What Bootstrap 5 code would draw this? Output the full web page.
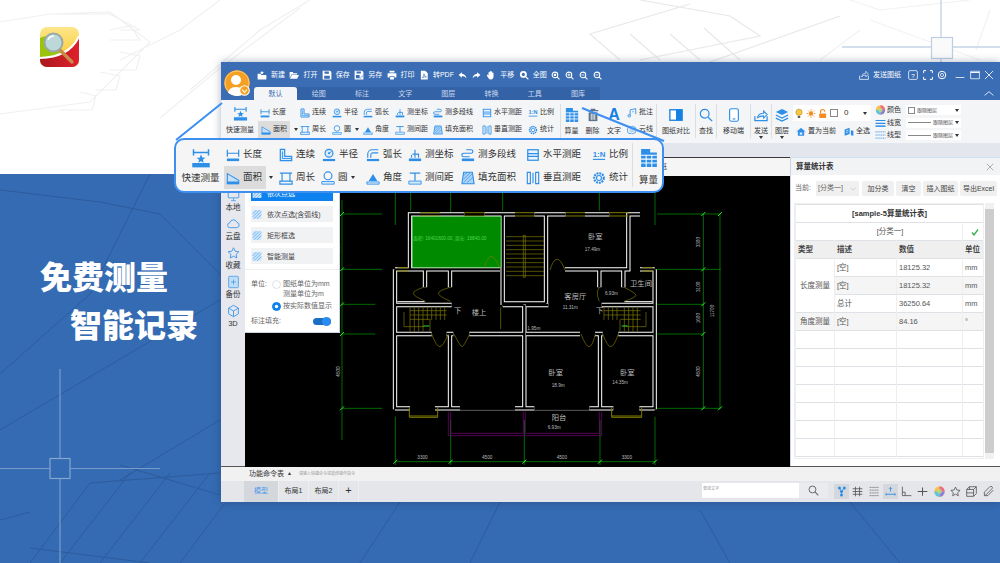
<!DOCTYPE html>
<html lang="zh">
<head>
<meta charset="UTF-8">
<title>免费测量 智能记录</title>
<link href="https://cdn.jsdelivr.net/npm/bootstrap@5.3.0/dist/css/bootstrap.min.css" rel="stylesheet">
<style>
body { margin: 0; background: #fff; font-family: "Liberation Sans", "Noto Sans CJK SC", sans-serif; color: #333; overflow: hidden; }
.slide { position: relative; width: 1000px; height: 563px; overflow: hidden; }
.band-top { position: relative; height: 174px; background: #fff; padding: 27px 0 0 40px; }
.band-low { position: relative; height: 389px; background: #356bb2; padding: 77px 0 0 40px; }
.bg-lines { position: absolute; left: 0; top: 0; width: 100%; height: 100%; }
.hero { position: relative; color: #fff; font-family: "Noto Sans CJK SC", sans-serif; font-weight: 900; font-size: 32px; line-height: 48px; }
.hero-two { padding-left: 30px; }
.app-logo { position: relative; display: block; width: 39px; height: 40px; }

.app-win { position: absolute; left: 221px; top: 62px; width: 779px; height: 440px; display: flex; flex-direction: column; background: #e6e8ee; box-shadow: 0 0 8px rgba(20,40,80,.35); }
.title-area { height: 38px; background: #3a6db3; display: flex; color: #fff; flex: none; }
.avatar { position: relative; width: 26px; height: 26px; margin: 8px 4px 0 3px; flex: none; }
.avatar-face { display: block; width: 26px; height: 26px; border-radius: 50%; }
.avatar-ok { position: absolute; left: 15px; top: 15px; width: 11px; height: 11px; }
.title-main { flex: 1; min-width: 0; display: flex; flex-direction: column; }
.quick-row { height: 25px; display: flex; align-items: center; font-size: 7px; padding-left: 3px; padding-top: 1px; }
.qi { display: flex; align-items: center; gap: 4px; margin-right: 4.4px; }
.qi svg { width: 10px; height: 10px; }
.qi-solo { margin-right: 5px; }
.qi-solo svg { width: 9px; height: 9px; }
.win-tools { margin-left: auto; display: flex; align-items: center; margin-right: 6px; font-size: 7px; }
.win-tools svg { width: 10px; height: 10px; margin-left: 4.5px; }
.win-tools svg:first-child { margin-left: 0; }
.win-tools span { margin: 0 2.5px 0 4px; }
.win-tools .win-min { margin-left: 8px; }
.tab-row { height: 13px; display: flex; font-size: 7px; align-items: stretch; }
.rtab { width: 43.2px; background: #3363a6; color: #c9d8ee; text-align: center; line-height: 13px; }
.rtab-on { background: #f4f5f7; color: #3a6db3; border-radius: 3px 3px 0 0; }
.rib-chevron { margin-left: auto; margin-right: 6px; width: 10px; height: 13px; }

.ribbon { height: 43px; background: #f4f5f7; display: flex; padding: 4px 0 0 1px; font-size: 7px; flex: none; }
.meas { display: grid; grid-auto-flow: column; grid-template-rows: 17px 17px; grid-template-columns: 36px 40px 32px 31px 32px 38px 49px 46px 34px; }
.mi { display: flex; align-items: center; gap: 2px; padding-left: 2px; white-space: nowrap; }
.mi svg, .mb svg { color: #2e8fe8; }
.mi svg { width: 10px; height: 10px; flex: none; }
.mi-sel { background: #dcdcdc; padding-left: 3px; padding-right: 3px; margin-left: -2px; height: 100%; }
.mi-drop { gap: 4px; padding-left: 2px; }
.rcaret { width: 0; height: 0; border: 2px solid transparent; border-top: 3px solid #333; border-bottom: 0; flex: none; }
.fast { grid-row: span 2; display: flex; flex-direction: column; align-items: center; }
.fast svg { width: 15px; height: 15px; color: #2e8fe8; margin-top: 2px; margin-bottom: 4px; }
.rsep { width: 1px; height: 34px; background: #dcdee2; flex: none; }
.mb { display: flex; flex-direction: column; align-items: center; flex: none; position: relative; white-space: nowrap; }
.mb-ico { height: 22px; display: flex; align-items: center; }
.mb-letter { color: #1480e2; font-size: 16px; line-height: 1; font-weight: 700; }
.mb svg { width: 14px; height: 14px; }
.mb .rcaret { position: absolute; left: 50%; margin-left: -2px; top: 32px; }
.mb-20 { width: 20px; } .mb-21 { width: 21px; } .mb-22 { width: 22px; } .mb-33 { width: 33px; } .mb-38 { width: 38px; }
.note-col { display: flex; flex-direction: column; width: 31px; flex: none; }
.note-col .mi { height: 17px; }
.layer-col { width: 78px; flex: none; display: flex; flex-direction: column; margin-left: 1px; }
.layer-box { height: 16px; margin-top: 1px; background: #fff; display: flex; align-items: center; gap: 2px; padding-left: 1px; font-size: 8px; }
.layer-box svg { width: 10px; height: 11px; }
.layer-chk { width: 8px; height: 8px; border: 1px solid #888; background: #fff; }
.layer-acts { display: flex; gap: 8px; margin-top: 2px; padding-left: 3px; height: 17px; align-items: center; }
.layer-acts .mi { padding: 0; }
.color-col { width: 92px; flex: none; margin-left: 4px; display: flex; flex-direction: column; }
.color-row { height: 12.5px; display: flex; align-items: center; gap: 1px; }
.color-row svg { width: 11px; height: 10px; flex: none; color: #2e8fe8; }
.color-row > span { width: 18px; }
.line-combo { width: 55px; height: 10px; background: #fff; display: flex; align-items: center; font-size: 5px; color: #555; padding: 0 2px; gap: 2px; white-space: nowrap; }
.combo-line { flex: 1; border-bottom: 1px solid #888; }
.combo-chk { width: 7px; height: 7px; border: 1px solid #888; flex: none; }
.line-combo .rcaret { margin-left: auto; }

.gap-band { height: 14px; background: #e3e6ec; flex: none; }
.work { height: 310px; display: flex; flex: none; border-top: 1px solid #3a3a3a; }
.side { width: 24px; background: #e6e8ee; flex: none; padding-top: 31px; margin-top: -1px; text-align: center; font-size: 7.5px; }
.side-it { height: 29px; display: flex; flex-direction: column; align-items: center; }
.side-it svg { width: 13px; height: 14px; color: #4a9ce8; flex: none; }
.center { flex: 1; min-width: 0; display: flex; flex-direction: column; }
.doc-strip { height: 18px; background: #f5f5f5; text-align: right; padding-right: 123px; font-size: 7px; line-height: 18px; flex: none; }
.canvas { position: relative; flex: 1; background: #000; overflow: hidden; }
.canvas-art { position: absolute; left: 0; top: 0; width: 545px; height: 291px; }
.mode-panel { position: absolute; left: 0; top: 0; width: 95px; height: 157px; background: #fff; border-right: 1px solid #c8d4e4; border-bottom: 1px solid #c8d4e4; padding: 9px 6px 0; font-size: 7px; }
.mode-btn { display: flex; align-items: center; gap: 5px; height: 16px; margin-bottom: 5px; padding: 0 1px; background: #f1f2f4; color: #444; border: 0; border-radius: 0; font-size: 7px; line-height: 1; white-space: nowrap; }
.mode-btn svg { width: 10px; height: 11px; color: #3b96ea; flex: none; }
.mode-on { background: #0d82ef; color: #fff; }
.mode-hr { margin: 0 -6px 9px; border-top: 1px solid #eee; opacity: 1; }
.unit-row { display: flex; color: #666; line-height: 10px; white-space: nowrap; }
.unit-name { width: 21px; }
.form-check-input.unit-radio { width: 9px; height: 9px; margin: .5px 2px 0 0; flex: none; background-color: #fff; }
.form-check-input.unit-radio:checked { background-color: #0d82ef; border-color: #0d82ef; }
.unit-next { margin: 2px 0 0 21px; }
.fill-row { display: flex; justify-content: space-between; align-items: center; color: #666; margin-top: 5px; padding-right: 2px; line-height: 10px; }
.tog { position: relative; width: 18px; height: 7px; border-radius: 4px; background: #1a6fc4; }
.tog i { position: absolute; right: 0; top: -1px; width: 9px; height: 9px; border-radius: 50%; background: #2a8cf0; }

.stat-pane { width: 210px; flex: none; background: #fff; display: flex; flex-direction: column; border-left: 1px solid #c8d4e4; font-size: 7.5px; margin-top: -1px; }
.stat-head { height: 18px; background: #f2f3f5; border-top: 1px solid #cfe0f4; display: flex; align-items: center; justify-content: space-between; padding: 0 6px 0 5px; font-weight: 700; font-size: 7.5px; flex: none; }
.stat-head svg { width: 8px; height: 8px; color: #888; }
.stat-bar { display: flex; align-items: center; padding: 6px 0 0 4px; height: 21px; color: #666; flex: none; white-space: nowrap; font-size: 7px; }
.stat-sel { width: 43px; height: 15px; background: #f0f0f0; display: flex; align-items: center; justify-content: space-between; padding: 0 3px 0 2px; margin: 0 3px 0 5px; flex: none; }
.stat-sel svg { width: 6px; height: 6px; color: #aaa; transform: rotate(180deg); }
.stat-btn { height: 15px; padding: 0; margin-right: 2px; background: #f0f0f0; border: 0; border-radius: 2px; font-size: 7px; line-height: 15px; color: #444; flex: none; white-space: nowrap; }
.sb-32 { width: 32px; } .sb-25 { width: 25px; } .sb-35 { width: 35px; } .sb-37 { width: 37px; }
.stat-body { display: flex; padding: 7px 5px 0 3px; gap: 1px; height: 265px; flex: none; }
.stat-wrap { width: 190px; height: 256px; overflow: hidden; border: 1px solid #eee; flex: none; }
.stat-table { table-layout: fixed; width: 188px; margin: 0; font-size: 7.5px; color: #555; }
.stat-table td { height: 18px; padding: 0 2px; border-color: #eee; vertical-align: middle; background: transparent; line-height: 1; box-shadow: none; }
.stat-title td { font-weight: 700; text-align: center; color: #333; }
.stat-th td { background: #efefef; font-weight: 700; color: #444; }
.stat-alt td { background: #f5f5f5; }
.col-a { width: 39px; } .col-b { width: 62px; } .col-c { width: 66px; } .col-d { width: 21px; }
.stat-scroll { width: 9px; background: #f1f1f1; position: relative; height: 256px; padding-top: 6px; flex: none; }
.stat-scroll i { display: block; height: 244px; background: #cdcdcd; }

.cmd-bar { height: 15px; background: #f1f1f1; border-top: 1px solid #555; display: flex; align-items: center; font-size: 7px; padding-left: 28px; flex: none; margin-top: -1px; }
.cmd-hint { margin-left: 7px; font-size: 4px; color: #999; }
.cmd-up { margin-left: 3px; font-size: 5px; }
.foot-bar { flex: 1; min-height: 0; background: #e4e6ea; display: flex; align-items: stretch; font-size: 7px; padding-left: 23px; }
.ftab { width: 30px; text-align: center; line-height: 19px; border-right: 1px solid #eceef1; }
.ftab-on { width: 35px; background: #d4d7dc; color: #4a9cf0; }
.ftab-add { width: 20px; font-size: 11px; }
.find-box { margin-left: auto; display: flex; align-items: center; margin-top: 2px; height: 15px; }
.find-in { width: 97px; height: 15px; background: #fff; font-size: 4px; color: #999; line-height: 11px; padding-left: 1px; }
.find-go { width: 29px; height: 15px; background: #e9ebef; display: flex; align-items: center; justify-content: center; }
.find-go svg { width: 11px; height: 11px; color: #666; }
.foot-icons { display: flex; align-items: center; gap: 5.300px; padding-left: 8px; width: 172px; overflow: hidden; flex: none; }
.foot-icons svg { width: 11px; height: 11px; flex: none; color: #555; }
.foot-icons svg.foot-on { background: #d4d7dc; color: #2e8fe8; outline: 2px solid #d4d7dc; }

.zoom-lines { position: absolute; left: 0; top: 0; width: 1000px; height: 563px; pointer-events: none; }
.zoom-card { position: absolute; left: 174px; top: 138px; width: 490px; height: 55px; background: #f5f5f5; border: 2px solid #3d8ff0; border-radius: 10px; display: flex; padding: 3px 0 0 1px; font-size: 9.5px; }
.zoom-card .meas { grid-template-rows: 23px 23px; grid-template-columns: 47px 53px 43px 44px 42px 53px 65px 66px 42px; }
.zoom-card .mi { gap: 3px; }
.zoom-card .mi svg { width: 14px; height: 14px; }
.zoom-card .mi-sel { margin-left: -1px; width: 42px; padding-left: 2px; gap: 3px; }
.zoom-card .mi-drop { gap: 3px; padding-left: 1px; }
.zoom-card .fast svg { width: 20px; height: 20px; margin-top: 5px; margin-bottom: 3px; }
.zoom-card .rsep { height: 44px; margin-right: 6px; }
.zoom-card .mb { width: 19px; }
.zoom-card .mb-ico { height: 30px; }
.zoom-card .mb svg { width: 18px; height: 18px; }
</style>
</head>
<body>

<svg width="0" height="0" class="d-none">
  <symbol id="i-fast" viewBox="0 0 16 16"><path d="M2 1v5M14 1v5M2 3.500h12" fill="none" stroke="currentColor" stroke-width="1.200"/><path d="M8 5l1 2.500 2.500.2-2 1.600.7 2.500L8 10.500l-2.200 1.300.7-2.500-2-1.600L7 7.700z" fill="currentColor"/><path d="M1 12h14v3.500H1z" fill="currentColor"/></symbol>
  <symbol id="i-len" viewBox="0 0 16 16"><path d="M1.500 2v8M14.500 2v8M1.500 6h13" fill="none" stroke="currentColor" stroke-width="1.400"/><path d="M1 12h14v3H1z" fill="currentColor"/></symbol>
  <symbol id="i-area" viewBox="0 0 16 16"><path d="M1.500 3L14.500 10.500v4h-13z" fill="#c4e0fa" stroke="currentColor" stroke-width="1.200"/><path d="M1 12h14v3H1z" fill="currentColor"/></symbol>
  <symbol id="i-cont" viewBox="0 0 16 16"><path d="M1.500 1.500h5v8h8v5h-13z" fill="#d8ebfc" stroke="currentColor" stroke-width="1.400"/><path d="M4 4v8h10" fill="none" stroke="currentColor"/></symbol>
  <symbol id="i-peri" viewBox="0 0 16 16"><path d="M1 2.500h14M3.500 2v10M12.500 2v10" fill="none" stroke="currentColor" stroke-width="1.300"/><path d="M1 11.500h14v3.500H1z" fill="none" stroke="currentColor" stroke-width="1.300"/></symbol>
  <symbol id="i-rad" viewBox="0 0 16 16"><circle cx="8" cy="6" r="4.500" fill="#d8ebfc" stroke="currentColor" stroke-width="1.300"/><path d="M8 6l3-2" stroke="currentColor"/><circle cx="8" cy="6" r="1.200" fill="currentColor"/><path d="M1 12.500h14v2.500H1z" fill="currentColor"/></symbol>
  <symbol id="i-circ" viewBox="0 0 16 16"><circle cx="8" cy="5.500" r="4.500" fill="none" stroke="currentColor" stroke-width="1.300"/><path d="M1 12h14v3H1z" fill="#d8ebfc" stroke="currentColor"/></symbol>
  <symbol id="i-arc" viewBox="0 0 16 16"><path d="M2 11V7a5 5 0 0 1 5-5h7M5.500 11V8a2.500 2.500 0 0 1 2.500-2.500h6" fill="none" stroke="currentColor" stroke-width="1.300"/><path d="M1 12.500h14v2.500H1z" fill="currentColor"/></symbol>
  <symbol id="i-ang" viewBox="0 0 16 16"><path d="M3 11.500L8 3.500l5 8z" fill="currentColor"/><path d="M1 12.500h14v2.500H1z" fill="#d8ebfc" stroke="currentColor"/></symbol>
  <symbol id="i-coord" viewBox="0 0 16 16"><path d="M8 2v9M5 7h7v4M4 11V8" fill="none" stroke="currentColor" stroke-width="1.300"/><path d="M1 12h14v3H1z" fill="currentColor"/></symbol>
  <symbol id="i-gap" viewBox="0 0 16 16"><path d="M2 2.500h12M8 2.500v8.500" fill="none" stroke="currentColor" stroke-width="1.400"/><path d="M1 11.500h14v3.500H1z" fill="#d8ebfc" stroke="currentColor"/></symbol>
  <symbol id="i-multi" viewBox="0 0 16 16"><path d="M3 6h8.500a2 2 0 0 0 0-4H6M3 6a2 2 0 0 0 0 4h7" fill="none" stroke="currentColor" stroke-width="1.300"/><path d="M1 12h14v3H1z" fill="currentColor"/></symbol>
  <symbol id="i-fill" viewBox="0 0 16 16"><path d="M3 1.500h10L15 14.500H1z" fill="#a8d2f8" stroke="currentColor" stroke-width="1.200"/><path d="M3 5l4-3M3 9l8-7M3 13l10-10M7 13l7-6" stroke="currentColor" stroke-width=".7"/></symbol>
  <symbol id="i-horz" viewBox="0 0 16 16"><rect x="2" y="2" width="12" height="12" fill="#e8f3fd" stroke="currentColor" stroke-width="1.400"/><path d="M2 6.500h12M2 9.500h12" stroke="currentColor" stroke-width="1.400"/></symbol>
  <symbol id="i-vert" viewBox="0 0 16 16"><path d="M1.500 1.500h3.500v13H1.500zM11 1.500h3.500v13H11z" fill="none" stroke="currentColor" stroke-width="1.300"/><path d="M8 2v12" stroke="currentColor" stroke-width="1.300"/></symbol>
  <symbol id="i-ratio" viewBox="0 0 16 16"><text x="8" y="10" font-size="9" font-weight="700" text-anchor="middle" fill="currentColor" font-family="Liberation Sans, sans-serif">1:N</text><path d="M1 13h14" stroke="currentColor" stroke-width="1.300"/></symbol>
  <symbol id="i-gear" viewBox="0 0 16 16"><circle cx="8" cy="8" r="5.500" fill="none" stroke="currentColor" stroke-width="2.400" stroke-dasharray="2.200 1"/><circle cx="8" cy="8" r="2.800" fill="none" stroke="currentColor" stroke-width="1.300"/></symbol>
  <symbol id="i-calc" viewBox="0 0 16 16"><path d="M1 0h8v3h6v13H1z" fill="#2e8fe8"/><path d="M1 5.500h14M1 9h14M1 12.500h14M5.500 5v11M10.500 5v11" stroke="#fff" stroke-width=".9"/></symbol>
  <symbol id="i-del" viewBox="0 0 16 16"><path d="M2 3h12M6 3V1.500h4V3" fill="none" stroke="#5d7488" stroke-width="1.400"/><path d="M3 5h10v10H3z" fill="#5d7488"/><path d="M6 6.500v7M8 6.500v7M10 6.500v7" stroke="#fff"/></symbol>
  <symbol id="i-note" viewBox="0 0 16 16"><path d="M5 12V3l9-2v9" fill="none" stroke="currentColor" stroke-width="1.400"/><circle cx="3.500" cy="12.500" r="2" fill="none" stroke="currentColor" stroke-width="1.400"/><path d="M8 6h3" stroke="currentColor"/></symbol>
  <symbol id="i-cloud" viewBox="0 0 16 16"><path d="M3 3q2-2 4 0 2-2 4 0 3 0 3 3 2 2 0 4 0 3-3 3-2 2-4 0-2 2-4 0-2 0-2-3-1-2 0-4 0-3 2-3z" fill="none" stroke="currentColor" stroke-width="1.300"/><path d="M4 5h8v6H4z" fill="currentColor" opacity=".3"/></symbol>
  <symbol id="i-cmp" viewBox="0 0 16 16"><rect x="1" y="2" width="14" height="12" fill="#fff" stroke="#1480e2" stroke-width="1.500"/><rect x="8" y="2" width="7" height="12" fill="#1480e2"/></symbol>
  <symbol id="i-find" viewBox="0 0 16 16"><circle cx="6.500" cy="6.500" r="5" fill="none" stroke="currentColor" stroke-width="1.400"/><path d="M10.500 10.500L15 15" stroke="currentColor" stroke-width="1.600"/></symbol>
  <symbol id="i-phone" viewBox="0 0 16 16"><rect x="3" y=".8" width="10" height="14.400" rx="2" fill="#fff" stroke="currentColor" stroke-width="1.300"/><path d="M6.500 12.500h3" stroke="currentColor" stroke-width="1.300"/></symbol>
  <symbol id="i-send" viewBox="0 0 16 16"><path d="M1 9.500v5h14v-5" fill="none" stroke="currentColor" stroke-width="1.400"/><path d="M4 11q1-5 7-5V3.500l4 4-4 4V9q-4 0-7 2z" fill="none" stroke="currentColor" stroke-width="1.200"/></symbol>
  <symbol id="i-layers" viewBox="0 0 16 16"><path d="M8 1l7 3.500-7 3.500-7-3.500z" fill="currentColor"/><path d="M1 8l7 3.500L15 8M1 11.500L8 15l7-3.500" fill="none" stroke="currentColor" stroke-width="1.500"/></symbol>
  <symbol id="i-bulb" viewBox="0 0 16 16"><circle cx="8" cy="6" r="5" fill="#f7c948" stroke="#b98a10"/><path d="M6 12h4v3H6z" fill="#555"/></symbol>
  <symbol id="i-sun" viewBox="0 0 16 16"><circle cx="8" cy="8" r="3.500" fill="#f58a1f"/><path d="M8 1v2.500M8 12.500V15M1 8h2.500M12.500 8H15M3 3l2 2M11 11l2 2M13 3l-2 2M5 11l-2 2" stroke="#f58a1f" stroke-width="1.300"/></symbol>
  <symbol id="i-lock" viewBox="0 0 16 16"><path d="M4 8V5a3.500 3.500 0 0 1 7 0" fill="none" stroke="#f58a1f" stroke-width="1.800"/><rect x="2" y="8" width="11" height="7" rx="1" fill="#f58a1f"/></symbol>
  <symbol id="i-setcur" viewBox="0 0 16 16"><path d="M3 6l5-4 5 4v8H3z" fill="currentColor"/><path d="M1 7.500L8 2l7 5.500" fill="none" stroke="currentColor"/><path d="M6 9h4v3H6z" fill="#fff"/></symbol>
  <symbol id="i-all" viewBox="0 0 16 16"><path d="M1 4l8-3v10l-8 3zM11 5l4 1v8l-4-1z" fill="currentColor"/><path d="M3 6l4-1M3 9l4-1" stroke="#fff"/></symbol>
  <symbol id="i-wheel" viewBox="0 0 16 16"><circle cx="8" cy="8" r="7.500" fill="#fbbf50"/><path d="M8 8V.5A7.500 7.500 0 0 1 15.500 8z" fill="#ec6a8f"/><path d="M8 8h7.500A7.500 7.500 0 0 1 8 15.500z" fill="#8d7ee0"/><path d="M8 8v7.500A7.500 7.500 0 0 1 .5 8z" fill="#5cc4e8"/><circle cx="8" cy="8" r="3.500" fill="#b7e07a" opacity=".8"/></symbol>
  <symbol id="i-lw" viewBox="0 0 16 16"><path d="M0 4h16M0 8.500h16" stroke="currentColor" stroke-width="1.800"/><path d="M0 13h16" stroke="currentColor" stroke-width="2.400"/></symbol>
  <symbol id="i-lt" viewBox="0 0 16 16"><path d="M0 3h16M0 8h16M0 13h16" stroke="currentColor" stroke-width="1.300" stroke-dasharray="2 1"/></symbol>

  <symbol id="q-new" viewBox="0 0 16 16"><path d="M1 6h5l1 2h8v7H1z" fill="currentColor"/><path d="M8 1l1 2 2 .2-1.500 1.400.4 2L8 5.600 6 6.600l.5-2L5 3.200 7 3z" fill="currentColor"/></symbol>
  <symbol id="q-open" viewBox="0 0 16 16"><path d="M1 3h5l1 2h6v2H4L1 13z" fill="currentColor"/><path d="M4.500 8H16l-3 6H1.500z" fill="currentColor"/></symbol>
  <symbol id="q-save" viewBox="0 0 16 16"><path d="M1 1h12l2 2v12H1z" fill="currentColor"/><path d="M4 2.500h7v3.500H4zM3.500 9h9v5h-9z" fill="#3a6db3"/></symbol>
  <symbol id="q-saveas" viewBox="0 0 16 16"><path d="M1 1h12l2 2v12H1z" fill="currentColor"/><path d="M4 2.500h7v3H4zM3 8h6v5H3z" fill="#3a6db3"/><path d="M9 13l5-5 1 1-5 5z" fill="currentColor" stroke="#3a6db3" stroke-width=".6"/></symbol>
  <symbol id="q-print" viewBox="0 0 16 16"><path d="M4 1h8v3H4zM1 5h14v7h-3v-2H4v2H1zM5 11h6v4H5z" fill="currentColor"/></symbol>
  <symbol id="q-pdf" viewBox="0 0 16 16"><path d="M3 1h7l4 4v10H3z" fill="currentColor"/><path d="M5 12q3-1 3-6 0 4 4 5-4 0-7 1z" fill="none" stroke="#3a6db3"/></symbol>
  <symbol id="q-undo" viewBox="0 0 16 16"><path d="M7 2L1 7l6 5V9q5 0 8 4-1-7-8-8z" fill="currentColor"/></symbol>
  <symbol id="q-redo" viewBox="0 0 16 16"><path d="M9 2l6 5-6 5V9q-5 0-8 4 1-7 8-8z" fill="currentColor"/></symbol>
  <symbol id="q-hand" viewBox="0 0 16 16"><path d="M4 9V4a1 1 0 0 1 2 0V2.500a1 1 0 0 1 2 0V3a1 1 0 0 1 2 0v2a1 1 0 0 1 2 0v5q0 5-4 5-3 0-4-2L1.500 9a1 1 0 0 1 2-1z" fill="currentColor"/></symbol>
  <symbol id="q-zoom" viewBox="0 0 16 16"><circle cx="7" cy="7" r="5.500" fill="currentColor"/><path d="M11 11l4 4" stroke="currentColor" stroke-width="2"/><circle cx="7" cy="7" r="2.500" fill="#3a6db3"/></symbol>
  <symbol id="q-zoomr" viewBox="0 0 16 16"><circle cx="7" cy="7" r="5" fill="none" stroke="currentColor" stroke-width="1.800"/><path d="M11 11l4 4" stroke="currentColor" stroke-width="2"/><path d="M5 5h4v4H5z" fill="currentColor"/></symbol>
  <symbol id="q-zoomp" viewBox="0 0 16 16"><circle cx="7" cy="7" r="5" fill="none" stroke="currentColor" stroke-width="1.800"/><path d="M11 11l4 4" stroke="currentColor" stroke-width="2"/><path d="M4.500 7h5M7 4.500v5" stroke="currentColor" stroke-width="1.500"/></symbol>
  <symbol id="q-zoomm" viewBox="0 0 16 16"><circle cx="7" cy="7" r="5" fill="none" stroke="currentColor" stroke-width="1.800"/><path d="M11 11l4 4" stroke="currentColor" stroke-width="2"/><path d="M4.500 7h5" stroke="currentColor" stroke-width="1.500"/></symbol>
  <symbol id="w-send" viewBox="0 0 16 16"><path d="M1 9v6h14V9" fill="none" stroke="currentColor" stroke-width="1.200"/><path d="M4 11q1-6 7-6V2l4 4.500L11 11V8q-4 0-7 3z" fill="none" stroke="currentColor"/></symbol>
  <symbol id="w-help" viewBox="0 0 16 16"><rect x="1" y="1" width="14" height="14" rx="2" fill="none" stroke="currentColor" stroke-width="1.200"/><text x="8" y="12" font-size="10" text-anchor="middle" fill="currentColor" font-family="Liberation Sans, sans-serif">?</text></symbol>
  <symbol id="w-full" viewBox="0 0 16 16"><path d="M1 5V1h4M11 1h4v4M15 11v4h-4M5 15H1v-4" fill="none" stroke="currentColor" stroke-width="1.600"/></symbol>
  <symbol id="w-gear" viewBox="0 0 16 16"><circle cx="8" cy="8" r="6" fill="none" stroke="currentColor" stroke-width="1.600"/><circle cx="8" cy="8" r="2.500" fill="none" stroke="currentColor" stroke-width="1.200"/></symbol>
  <symbol id="w-min" viewBox="0 0 16 16"><path d="M1 12h14" stroke="currentColor" stroke-width="1.200"/></symbol>
  <symbol id="w-max" viewBox="0 0 16 16"><path d="M1 2h14v12H1z" fill="none" stroke="currentColor" stroke-width="1.200"/><path d="M1 4h14" stroke="currentColor" stroke-width="1.500"/></symbol>
  <symbol id="w-x" viewBox="0 0 16 16"><path d="M1.500 1.500l13 13M14.500 1.500l-13 13" stroke="currentColor" stroke-width="1.300"/></symbol>
  <symbol id="w-up" viewBox="0 0 16 16"><path d="M1 11l7-6 7 6" fill="none" stroke="currentColor" stroke-width="1.300"/></symbol>

  <symbol id="s-pc" viewBox="0 0 16 16"><rect x="1.500" y="1.500" width="13" height="10" rx="1" fill="none" stroke="currentColor" stroke-width="1.200"/><path d="M5 15h6M8 12v3" stroke="currentColor"/></symbol>
  <symbol id="s-cloud" viewBox="0 0 16 16"><path d="M4 12.500a3 3 0 0 1-.5-6 4.500 4.500 0 0 1 8.700-.5 3.300 3.300 0 0 1 0 6.500z" fill="none" stroke="currentColor" stroke-width="1.200"/></symbol>
  <symbol id="s-star" viewBox="0 0 16 16"><path d="M8 1.500l2 4.300 4.700.6-3.500 3.200.9 4.600L8 11.900l-4.100 2.300.9-4.600L1.300 6.400 6 5.800z" fill="none" stroke="currentColor" stroke-width="1.200"/></symbol>
  <symbol id="s-bak" viewBox="0 0 16 16"><rect x="2" y="1" width="12" height="14" rx="1" fill="#bfdcf8" stroke="currentColor"/><path d="M5 8h6M8 5v6" stroke="currentColor"/></symbol>
  <symbol id="s-cube" viewBox="0 0 16 16"><path d="M8 1l6 3.500v7L8 15l-6-3.500v-7zM2 4.500L8 8l6-3.500M8 8v7" fill="none" stroke="currentColor" stroke-width="1.200"/></symbol>
  <symbol id="m-hatch" viewBox="0 0 16 16"><rect x="1" y="1" width="14" height="14" fill="#cfe6fb"/><path d="M1 7l6-6M1 12L12 1M3 15L15 3M8 15l7-7" stroke="currentColor" stroke-width="1"/></symbol>
  <symbol id="f-snap" viewBox="0 0 16 16"><path d="M5 3l3 5 4-5M8 8v5" fill="none" stroke="currentColor" stroke-width="1.200"/><circle cx="5" cy="3" r="2.200" fill="currentColor"/><circle cx="12" cy="3" r="2.200" fill="currentColor"/><circle cx="8" cy="8" r="2.200" fill="currentColor"/><circle cx="8" cy="13" r="2.200" fill="currentColor"/></symbol>
  <symbol id="f-grid" viewBox="0 0 16 16"><path d="M1 4h14M1 8h14M1 12h14M5 1v14M11 1v14" stroke="currentColor" stroke-width="1.200"/></symbol>
  <symbol id="f-dots" viewBox="0 0 16 16"><path d="M1 2h14M1 6h14M1 10h14M1 14h14" stroke="currentColor" stroke-width="1.400" stroke-dasharray="1.400 1.400"/></symbol>
  <symbol id="f-ortho" viewBox="0 0 16 16"><path d="M1 12h14" stroke="currentColor" stroke-width="1.300"/><path d="M8 2v6M6 4l2-2 2 2" fill="none" stroke="currentColor" stroke-width="1.300"/><path d="M2 10l-1 2 1 2M14 10l1 2-1 2" fill="none" stroke="currentColor"/></symbol>
  <symbol id="f-angle" viewBox="0 0 16 16"><path d="M2 1v13h13M2 9h4v5" fill="none" stroke="currentColor" stroke-width="1.200"/></symbol>
  <symbol id="f-cross" viewBox="0 0 16 16"><path d="M1 8h14M8 2v12" stroke="currentColor" stroke-width="1.500"/></symbol>
  <symbol id="f-box" viewBox="0 0 16 16"><path d="M1 5h10v10H1zM1 5l4-4h10v10l-4 4M11 5l4-4M5 5V1M1 10h10" fill="none" stroke="currentColor" stroke-width="1.200"/></symbol>
  <symbol id="f-clip" viewBox="0 0 16 16"><path d="M3 14L13 4a2 2 0 0 0-3-3L2 9v5h5l8-8" fill="none" stroke="currentColor" stroke-width="1.200"/></symbol>
  <path id="wall-lines" d="M180 73H90V238M253 73H180M405 73H313M557 73H463M688 73H615M780 73H745V238H555M368 73V345M498 73V340M368 340H498M463 73H500M90 238H360M45 238V658M135 238V292M210 238V292M45 345H215M45 432H155M658 238V292M730 238V292M824 238V658M665 345H820M433 345V655M368 345H430M268 432H430M438 432H600M438 345H505M715 432H820M645 432H668M200 432H220M210 432V655M660 432V655M45 655H90M165 655H240M405 655H463M628 655H700M778 655H824M45 238H90M780 238H824"/>
</svg>

<div class="slide">
  <div class="band-top">
    <svg class="bg-lines" viewBox="0 0 1000 174" fill="none" stroke="#f0f0f0" stroke-width="1.200">
      <path d="M0 22L50 14l60 -2 40 30-60 60-90 12M50 14h60l30 16h-20M110 30l20-4 10 14h-30M120 52l20 4 -4 14h-26M100 72l20 4-4 14h-20M80 92l16 4-4 14H60"/>
      <path d="M120 60l60-30 40-30M190 90l70-60 50-30M160 118l60-50 80-60"/>
      <path d="M620 60l-30-26 100-30M660 60l-30-26M700 60l-30-26M740 60l-36-32M640 0l90 16 30 20-120 24M840 16l-130 46" stroke="#e8e8e8"/>
      <path d="M850 0l30 10 90-10M860 30l-40 30M870 20l110 40M990 10l-14 40" stroke="#f2f2f2"/>
      <path d="M941 0v37M941 58v6M842 47h89M952 47h48" stroke="#c5d4e8" stroke-width="1.400"/>
      <rect x="931.500" y="37.500" width="21" height="21" fill="#fafafa" stroke="#bccde4" stroke-width="1.200"/>
    </svg>
    <svg class="app-logo" viewBox="0 0 39 40">
      <defs>
        <linearGradient id="lg-y" x1="0" y1="0" x2="0" y2="1"><stop offset="0" stop-color="#fde68a"/><stop offset="1" stop-color="#f7c21c"/></linearGradient>
        <linearGradient id="lg-r" x1="0" y1="0" x2="1" y2="0"><stop offset="0" stop-color="#a81820"/><stop offset="1" stop-color="#e0202a"/></linearGradient>
        <clipPath id="lg-clip"><rect width="39" height="40" rx="7"/></clipPath>
      </defs>
      <g clip-path="url(#lg-clip)">
        <rect width="39" height="40" fill="url(#lg-y)"/>
        <path d="M0 11q8-5 16 4l10 15-26 2z" fill="#9ac40c"/>
        <path d="M39 9Q30 30 0 31v9h39z" fill="url(#lg-r)"/>
        <path d="M39 9Q30 30 0 31" fill="none" stroke="#fff" stroke-width="2"/>
      </g>
      <path d="M20 23l12 12" stroke="#c98a4a" stroke-width="3.400" stroke-linecap="round"/>
      <circle cx="13.500" cy="15.500" r="9" fill="#bcd8d8" stroke="#9aa8a8" stroke-width="2"/>
      <path d="M8 13a6 6 0 0 1 6-4" fill="none" stroke="#fff" stroke-width="1.500"/>
    </svg>
  </div>
  <div class="band-low">
    <svg class="bg-lines" viewBox="0 174 1000 389" fill="none" stroke="#2d5c9e" stroke-width="1">
      <path d="M0 190l100 12 60 12 60 60M150 174l-60 120-90 80M0 520l30-8M30 563l60-80 130-10M60 563l70-90M100 563l70-90M140 563l70-90M180 563l45-60M30 548l120 15M120 465l100 30M220 420L120 480M0 430l220-130M400 502l-40 61M500 502l-30 61M700 510l30 53M850 502l50 61" />
      <path d="M60 369v89M60 478v85M0 468.500h50M70 468.500h90" stroke="#7a9cca" stroke-width="1.200"/>
      <rect x="50" y="458.500" width="20" height="20" stroke="#86a6d0" stroke-width="1.200"/>
    </svg>
    <div class="hero">免费测量</div>
    <div class="hero hero-two">智能记录</div>
  </div>

  <div class="app-win">
    <div class="title-area">
      <div class="avatar">
        <svg class="avatar-face" viewBox="0 0 26 26"><circle cx="13" cy="13" r="13" fill="#f5a023"/><circle cx="13" cy="13" r="12" fill="none" stroke="#f9c77a"/><circle cx="12" cy="10" r="5" fill="#fff"/><path d="M3 26q1-9 9-9t9 9z" fill="#fff"/></svg>
        <svg class="avatar-ok" viewBox="0 0 16 16"><circle cx="8" cy="8" r="7" fill="#f5a023" stroke="#fff" stroke-width="1.500"/><path d="M4.500 6.500L8 11l3.500-4.500" fill="none" stroke="#fff" stroke-width="1.500"/></svg>
      </div>
      <div class="title-main">
        <div class="quick-row">
          <div class="qi"><svg><use href="#q-new"/></svg>新建</div>
          <div class="qi"><svg><use href="#q-open"/></svg>打开</div>
          <div class="qi"><svg><use href="#q-save"/></svg>保存</div>
          <div class="qi"><svg><use href="#q-saveas"/></svg>另存</div>
          <div class="qi"><svg><use href="#q-print"/></svg>打印</div>
          <div class="qi"><svg><use href="#q-pdf"/></svg>转PDF</div>
          <div class="qi qi-solo"><svg><use href="#q-undo"/></svg></div>
          <div class="qi qi-solo"><svg><use href="#q-redo"/></svg></div>
          <div class="qi"><svg><use href="#q-hand"/></svg>平移</div>
          <div class="qi"><svg><use href="#q-zoom"/></svg>全图</div>
          <div class="qi qi-solo"><svg><use href="#q-zoomr"/></svg></div>
          <div class="qi qi-solo"><svg><use href="#q-zoomp"/></svg></div>
          <div class="qi qi-solo"><svg><use href="#q-zoomm"/></svg></div>
          <div class="qi qi-solo"><svg><use href="#q-zoomm"/></svg></div>
          <div class="win-tools">
            <svg><use href="#w-send"/></svg><span>发送图纸</span>
            <svg><use href="#w-help"/></svg><svg><use href="#w-full"/></svg><svg><use href="#w-gear"/></svg>
            <svg class="win-min"><use href="#w-min"/></svg><svg><use href="#w-max"/></svg><svg><use href="#w-x"/></svg>
          </div>
        </div>
        <div class="tab-row">
          <div class="rtab rtab-on">默认</div>
          <div class="rtab">绘图</div>
          <div class="rtab">标注</div>
          <div class="rtab">文字</div>
          <div class="rtab">图层</div>
          <div class="rtab">转换</div>
          <div class="rtab">工具</div>
          <div class="rtab">图库</div>
          <svg class="rib-chevron"><use href="#w-up"/></svg>
        </div>
      </div>
    </div>

    <div class="ribbon">
      <div class="meas">
        <div class="fast"><svg><use href="#i-fast"/></svg>快速测量</div>
        <div class="mi"><svg><use href="#i-len"/></svg>长度</div>
        <div class="mi mi-drop"><div class="mi mi-sel"><svg><use href="#i-area"/></svg>面积</div><i class="rcaret"></i></div>
        <div class="mi"><svg><use href="#i-cont"/></svg>连续</div>
        <div class="mi"><svg><use href="#i-peri"/></svg>周长</div>
        <div class="mi"><svg><use href="#i-rad"/></svg>半径</div>
        <div class="mi mi-drop"><div class="mi ps-0"><svg><use href="#i-circ"/></svg>圆</div><i class="rcaret"></i></div>
        <div class="mi"><svg><use href="#i-arc"/></svg>弧长</div>
        <div class="mi"><svg><use href="#i-ang"/></svg>角度</div>
        <div class="mi"><svg><use href="#i-coord"/></svg>测坐标</div>
        <div class="mi"><svg><use href="#i-gap"/></svg>测间距</div>
        <div class="mi"><svg><use href="#i-multi"/></svg>测多段线</div>
        <div class="mi"><svg><use href="#i-fill"/></svg>填充面积</div>
        <div class="mi"><svg><use href="#i-horz"/></svg>水平测距</div>
        <div class="mi"><svg><use href="#i-vert"/></svg>垂直测距</div>
        <div class="mi"><svg><use href="#i-ratio"/></svg>比例</div>
        <div class="mi"><svg><use href="#i-gear"/></svg>统计</div>
      </div>
      <div class="rsep"></div>
      <div class="mb mb-21"><div class="mb-ico"><svg><use href="#i-calc"/></svg></div>算量</div>
      <div class="mb mb-21"><div class="mb-ico"><svg><use href="#i-del"/></svg></div>删除</div>
      <div class="mb mb-22"><div class="mb-ico mb-letter">A</div>文字</div>
      <div class="note-col">
        <div class="mi"><svg><use href="#i-note"/></svg>批注</div>
        <div class="mi"><svg><use href="#i-cloud"/></svg>云线</div>
      </div>
      <div class="rsep"></div>
      <div class="mb mb-38"><div class="mb-ico"><svg><use href="#i-cmp"/></svg></div>图纸对比</div>
      <div class="rsep"></div>
      <div class="mb mb-20"><div class="mb-ico"><svg><use href="#i-find"/></svg></div>查找</div>
      <div class="rsep"></div>
      <div class="mb mb-33"><div class="mb-ico"><svg><use href="#i-phone"/></svg></div>移动端</div>
      <div class="rsep"></div>
      <div class="mb mb-20"><div class="mb-ico"><svg><use href="#i-send"/></svg></div>发送<i class="rcaret"></i></div>
      <div class="rsep"></div>
      <div class="mb mb-20"><div class="mb-ico"><svg><use href="#i-layers"/></svg></div>图层<i class="rcaret"></i></div>
      <div class="layer-col">
        <div class="layer-box">
          <svg><use href="#i-bulb"/></svg><svg><use href="#i-sun"/></svg><svg><use href="#i-lock"/></svg><span class="layer-chk"></span><span class="ms-1 flex-grow-1">0</span><i class="rcaret me-1"></i>
        </div>
        <div class="layer-acts">
          <div class="mi"><svg><use href="#i-setcur"/></svg>置为当前</div>
          <div class="mi"><svg><use href="#i-all"/></svg>全选</div>
        </div>
      </div>
      <div class="color-col">
        <div class="color-row"><svg><use href="#i-wheel"/></svg><span>颜色</span><div class="line-combo"><b class="combo-chk"></b><b class="fw-normal">跟随图层</b><i class="rcaret"></i></div></div>
        <div class="color-row"><svg><use href="#i-lw"/></svg><span>线宽</span><div class="line-combo"><b class="combo-line"></b><b class="fw-normal">跟随图层</b><i class="rcaret ms-0"></i></div></div>
        <div class="color-row"><svg><use href="#i-lt"/></svg><span>线型</span><div class="line-combo"><b class="combo-line"></b><b class="fw-normal">跟随图层</b><i class="rcaret ms-0"></i></div></div>
      </div>
    </div>

    <div class="gap-band"></div>

    <div class="work">
      <div class="side">
        <div class="side-it"><svg><use href="#s-pc"/></svg>本地</div>
        <div class="side-it"><svg><use href="#s-cloud"/></svg>云盘</div>
        <div class="side-it"><svg><use href="#s-star"/></svg>收藏</div>
        <div class="side-it"><svg><use href="#s-bak"/></svg>备份</div>
        <div class="side-it"><svg><use href="#s-cube"/></svg>3D</div>
      </div>
      <div class="center">
        <div class="doc-strip">图纸</div>
        <div class="canvas">
          <svg class="canvas-art" viewBox="245 176 545 291" font-family="Liberation Sans, Noto Sans CJK SC, sans-serif">
            <g transform="translate(380 190) scale(.33333)" fill="none">
              <!-- dimension lines -->
              <g stroke="#00a000" stroke-width="2">
                <path d="M46 -40v145M92 -40v102M212 -40v145M368 -40v102M658 -40v102M825 -40v145"/>
                <path d="M46 680v145M212 690v135M433 690v135M660 690v135M825 680v145M46 815H825"/>
                <path d="M832 72h190M832 238h190M832 343h140M832 432h140M832 655h190M970 72v583M1020 72v583"/>
                <path d="M-114 30v720M-114 72h120M-114 238h120M-114 343h100M-114 432h100M-114 655h120"/>
              </g>
              <g stroke="#2fe22f" stroke-width="3">
                <path d="M40 821l12-12M206 821l12-12M427 821l12-12M654 821l12-12M819 821l12-12M964 78l12-12M964 244l12-12M964 349l12-12M964 438l12-12M964 661l12-12M1014 78l12-12M1014 661l12-12M-120 78l12-12M-120 244l12-12M-120 349l12-12M-120 438l12-12M-120 661l12-12"/>
              </g>
              <!-- walls -->
              <use href="#wall-lines" stroke="#fff" stroke-width="13"/>
              <use href="#wall-lines" stroke="#000" stroke-width="7"/>
              <path d="M52 335h82M733 335h85" stroke="#fff" stroke-width="3"/>
              <!-- windows -->
              <g stroke="#807a00" stroke-width="3">
                <path d="M120 68h60M120 78h60M253 68h60M253 78h60M405 68h58M405 78h58M557 68h58M557 78h58M688 68h57M688 78h57M52 233h33M52 243h33M786 233h33M786 243h33"/>
                <path d="M88 652v30h85v-30M695 652v30h90v-30M88 678h85M695 678h90"/>
              </g>
              <!-- green room -->
              <rect x="97" y="80" width="266" height="152" fill="#008a00" stroke="#7fe07f" stroke-width="2"/>
              <path d="M240 661H405M463 661H628" stroke="#888" stroke-width="2"/>
              <!-- balcony -->
              <path d="M205 665V737H665V665M212 665V730H430V665M436 665V730H658V665" stroke="#800080" stroke-width="2"/>
              <!-- stairs -->
              <g stroke="#807a00" stroke-width="2">
                <path d="M378 140H492M378 153H492M378 166H492M378 179H492M378 192H492M378 205H492M378 218H492M378 231H492M378 244H492M378 257H492"/>
                <path d="M430 136h6v126h-6z"/>
                <path d="M90 350v75M103 350v75M116 350v75M129 350v75M142 350v40M155 350v40M168 350v40M181 350v40M194 350v40M90 362h110M90 375h110M90 388h62M150 390v35"/>
                <path d="M720 390v35M733 350v75M746 350v75M759 350v75M772 350v75M672 350v40M685 350v40M698 350v40M711 350v40M672 362h110M672 375h110M720 388h62"/>
                <path d="M72 366v44h60M798 366v44h-60"/>
                <!-- doors -->
                <path d="M313 232q20-65 45 0M510 240q20-65 45 0M130 292q-30 10-30 18t36 24M210 292q-35 10-35 18t36 24M658 292q-12 16 0 42M733 292q35 18 35 24t-35 18M155 432q15 40 25 38t25-38M222 432q20 40 25 38t22-38M603 432q15 40 25 38t18-38M668 432q15 40 25 38t22-38M362 352v65"/>
              </g>
              <path d="M130 408h18M725 408h18" stroke="#2fe22f" stroke-width="3"/>
              <!-- drawing labels -->
              <g fill="#50d850" stroke="none"><text x="100" y="150" font-size="14">面积: 16401600.00, 周长: 16840.00</text></g>
              <g fill="#bbb" stroke="none" font-size="22">
                <text x="624" y="146">卧室</text><text x="750" y="289">卫生间</text><text x="553" y="326">客房厅</text><text x="275" y="376">楼上</text><text x="505" y="556">卧室</text><text x="720" y="554">卧室</text><text x="515" y="691">阳台</text><text x="222" y="370">下</text><text x="648" y="370">下</text>
              </g>
              <g fill="#bbb" stroke="none" font-size="14">
                <text x="614" y="182">17.49m</text><text x="675" y="315">6.93m</text><text x="548" y="358">11.31m</text><text x="442" y="419">1.95m</text><text x="515" y="590">18.9m</text><text x="697" y="583">14.35m</text><text x="503" y="718">6.93m</text>
                <text x="112" y="808">3300</text><text x="306" y="808">4500</text><text x="530" y="808">4500</text><text x="725" y="808">3300</text>
                <text transform="translate(961 172) rotate(-90)">3300</text><text transform="translate(961 306) rotate(-90)">3100</text><text transform="translate(961 400) rotate(-90)">1600</text><text transform="translate(961 560) rotate(-90)">4500</text><text transform="translate(1001 382) rotate(-90)">11700</text>
                <text transform="translate(-120 190) rotate(-90)">3300</text><text transform="translate(-120 560) rotate(-90)">4500</text>
              </g>
            </g>
          </svg>
          <div class="mode-panel">
            <button class="btn mode-btn w-100 mode-on"><svg><use href="#m-hatch"/></svg>依次点选</button>
            <button class="btn mode-btn w-100"><svg><use href="#m-hatch"/></svg>依次点选(含弧线)</button>
            <button class="btn mode-btn w-100"><svg><use href="#m-hatch"/></svg>矩形框选</button>
            <button class="btn mode-btn w-100"><svg><use href="#m-hatch"/></svg>智能测量</button>
            <hr class="mode-hr">
            <div class="unit-row"><span class="unit-name">单位:</span><input class="form-check-input unit-radio" type="radio" name="unit"><span>图纸单位为mm<br>测量单位为m</span></div>
            <div class="unit-row unit-next"><input class="form-check-input unit-radio" type="radio" name="unit" checked><span>按实际数值显示</span></div>
            <div class="fill-row"><span>标注填充:</span><span class="tog"><i></i></span></div>
          </div>
        </div>
      </div>
      <div class="stat-pane">
        <div class="stat-head"><span>算量统计表</span><svg><use href="#w-x"/></svg></div>
        <div class="stat-bar">
          <span>当前:</span>
          <div class="stat-sel"><span>[分类一]</span><svg><use href="#w-up"/></svg></div>
          <button class="btn stat-btn sb-32">加分类</button>
          <button class="btn stat-btn sb-25">清空</button>
          <button class="btn stat-btn sb-35">插入图纸</button>
          <button class="btn stat-btn sb-37">导出Excel</button>
        </div>
        <div class="stat-body">
          <div class="stat-wrap">
            <table class="table table-bordered stat-table">
              <colgroup><col class="col-a"><col class="col-b"><col class="col-c"><col class="col-d"></colgroup>
              <tr class="stat-title"><td colspan="4">[sample-5算量统计表]</td></tr>
              <tr><td colspan="3" class="text-center ps-4">[分类一]</td><td class="text-end pe-1"><svg width="8" height="8" viewBox="0 0 16 16"><path d="M2 9l4 5 8-11" fill="none" stroke="#35b04a" stroke-width="2.600"/></svg></td></tr>
              <tr class="stat-th"><td>类型</td><td>描述</td><td>数值</td><td>单位</td></tr>
              <tr><td rowspan="3" class="text-center">长度测量</td><td>[空]</td><td>18125.32</td><td>mm</td></tr>
              <tr class="stat-alt"><td>[空]</td><td>18125.32</td><td>mm</td></tr>
              <tr><td>总计</td><td>36250.64</td><td>mm</td></tr>
              <tr class="stat-alt"><td class="text-center">角度测量</td><td>[空]</td><td>84.16</td><td>°</td></tr>
              <tr><td></td><td></td><td></td><td></td></tr>
              <tr><td></td><td></td><td></td><td></td></tr>
              <tr><td></td><td></td><td></td><td></td></tr>
              <tr><td></td><td></td><td></td><td></td></tr>
              <tr><td></td><td></td><td></td><td></td></tr>
              <tr><td></td><td></td><td></td><td></td></tr>
              <tr><td></td><td></td><td></td><td></td></tr>
            </table>
          </div>
          <div class="stat-scroll"><i></i></div>
        </div>
      </div>
    </div>

    <div class="cmd-bar">功能命令表<span class="cmd-up">▲</span><span class="cmd-hint">请输入快捷命令或选择操作指令</span></div>
    <div class="foot-bar">
      <div class="ftab ftab-on">模型</div>
      <div class="ftab">布局1</div>
      <div class="ftab">布局2</div>
      <div class="ftab ftab-add">+</div>
      <div class="find-box">
        <div class="find-in">查找文字</div>
        <div class="find-go"><svg><use href="#i-find"/></svg></div>
      </div>
      <div class="foot-icons">
        <svg class="foot-on"><use href="#f-snap"/></svg>
        <svg><use href="#f-grid"/></svg>
        <svg><use href="#f-dots"/></svg>
        <svg class="foot-on"><use href="#f-ortho"/></svg>
        <svg><use href="#f-angle"/></svg>
        <svg><use href="#f-cross"/></svg>
        <svg><use href="#i-wheel"/></svg>
        <svg><use href="#s-star"/></svg>
        <svg><use href="#f-box"/></svg>
        <svg><use href="#f-clip"/></svg>
      </div>
    </div>
  </div>

  <svg class="zoom-lines"><path d="M222 103L176 140M582 108L664 141" stroke="#3d8ff0" stroke-width="2" fill="none"/></svg>

  <div class="zoom-card">
    <div class="meas">
      <div class="fast"><svg><use href="#i-fast"/></svg>快速测量</div>
      <div class="mi"><svg><use href="#i-len"/></svg>长度</div>
      <div class="mi mi-drop"><div class="mi mi-sel"><svg><use href="#i-area"/></svg>面积</div><i class="rcaret"></i></div>
      <div class="mi"><svg><use href="#i-cont"/></svg>连续</div>
      <div class="mi"><svg><use href="#i-peri"/></svg>周长</div>
      <div class="mi"><svg><use href="#i-rad"/></svg>半径</div>
      <div class="mi mi-drop"><div class="mi ps-0"><svg><use href="#i-circ"/></svg>圆</div><i class="rcaret"></i></div>
      <div class="mi"><svg><use href="#i-arc"/></svg>弧长</div>
      <div class="mi"><svg><use href="#i-ang"/></svg>角度</div>
      <div class="mi"><svg><use href="#i-coord"/></svg>测坐标</div>
      <div class="mi"><svg><use href="#i-gap"/></svg>测间距</div>
      <div class="mi"><svg><use href="#i-multi"/></svg>测多段线</div>
      <div class="mi"><svg><use href="#i-fill"/></svg>填充面积</div>
      <div class="mi"><svg><use href="#i-horz"/></svg>水平测距</div>
      <div class="mi"><svg><use href="#i-vert"/></svg>垂直测距</div>
      <div class="mi"><svg><use href="#i-ratio"/></svg>比例</div>
      <div class="mi"><svg><use href="#i-gear"/></svg>统计</div>
    </div>
    <div class="rsep"></div>
    <div class="mb"><div class="mb-ico"><svg><use href="#i-calc"/></svg></div>算量</div>
  </div>
</div>

<script src="https://cdn.jsdelivr.net/npm/bootstrap@5.3.0/dist/js/bootstrap.bundle.min.js"></script>
</body>
</html>
